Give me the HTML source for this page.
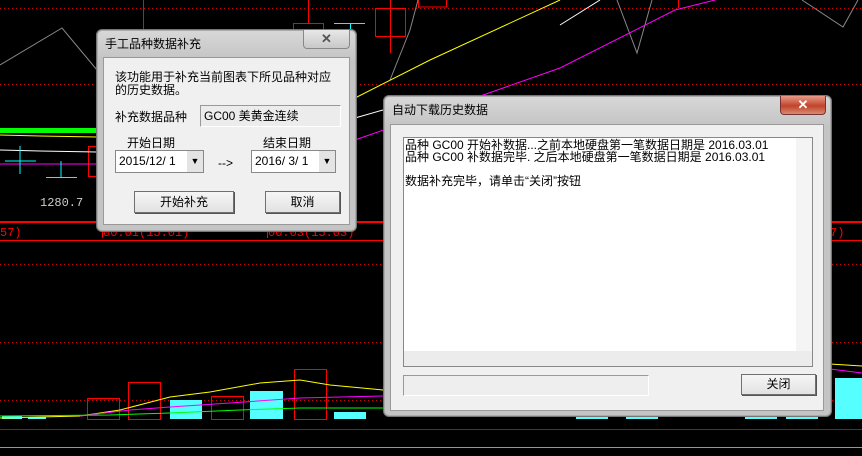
<!DOCTYPE html>
<html><head><meta charset="utf-8"><style>
body{margin:0;width:862px;height:456px;background:#000;overflow:hidden;position:relative;font-family:"Liberation Sans","Noto Sans CJK SC","WenQuanYi Zen Hei",sans-serif;font-size:12px;color:#000}
.abs{position:absolute}
.dlg{position:absolute;background:linear-gradient(#d8d8d8,#c4c4c4 30px,#c4c4c4);border:1px solid #777;border-radius:6px;box-shadow:0 0 0 1px #aaa inset}
.inner{position:absolute;background:#f0f0f0;border:1px solid #999}
.btn{position:absolute;background:linear-gradient(#f6f6f6,#e2e2e2);border:1px solid #707070;box-shadow:1px 1px 0 #555;text-align:center;font-size:12px}
.t{position:absolute;white-space:nowrap}
</style></head><body>
<svg class="abs" style="left:0;top:0" width="862" height="456">
<g stroke="#c00" stroke-dasharray="1 3" stroke-width="1">
<line x1="0" y1="8.5" x2="862" y2="8.5"/><line x1="0" y1="84.5" x2="862" y2="84.5"/>
<line x1="0" y1="264.5" x2="862" y2="264.5"/><line x1="0" y1="342.5" x2="862" y2="342.5"/><line x1="0" y1="400.5" x2="862" y2="400.5"/>
</g>
<line x1="0" y1="222" x2="862" y2="222" stroke="#f00" stroke-width="2"/>
<line x1="0" y1="240.5" x2="862" y2="240.5" stroke="#f00"/>
<line x1="0" y1="429.5" x2="862" y2="429.5" stroke="#c00"/>
<line x1="0" y1="447.5" x2="862" y2="447.5" stroke="#0f0"/>
<g stroke="#f00" fill="none">
<line x1="143.5" y1="0" x2="143.5" y2="29"/><line x1="308.5" y1="0" x2="308.5" y2="23"/><rect x="293.5" y="23.5" width="30" height="10"/>
<line x1="390.5" y1="0" x2="390.5" y2="53"/><rect x="375.5" y="8.5" width="30" height="28"/><line x1="418.5" y1="0" x2="418.5" y2="8"/><rect x="418.5" y="-2" width="28" height="9"/>
<rect x="88.5" y="146.5" width="8" height="30"/>
<line x1="678.5" y1="0" x2="678.5" y2="8"/>
</g>
<line x1="334" y1="23.5" x2="365" y2="23.5" stroke="#0ff"/><line x1="350.5" y1="23" x2="350.5" y2="30" stroke="#0ff"/>
<polyline points="0,65 62,28 97,70" stroke="#888" fill="none"/>
<polyline points="390,80 410,30 418,0" stroke="#888" fill="none"/>
<polyline points="617,0 637,53 652,0" stroke="#888" fill="none"/>
<polyline points="802,0 843,27 858,0" stroke="#888" fill="none"/>
<polyline points="355,98 430,60 560,0" stroke="#ff0" fill="none"/>
<polyline points="355,140 560,68 675,10 715,0" stroke="#f0f" fill="none"/>
<polyline points="355,118 383,110" stroke="#fff" fill="none"/><polyline points="560,25 600,0" stroke="#fff" fill="none"/>
<rect x="0" y="128" width="97" height="5" fill="#0f0"/>
<polyline points="0,135 40,136 97,137" stroke="#ff0" fill="none"/>
<polyline points="0,150 40,151 97,152" stroke="#fff" fill="none"/>
<polyline points="0,164 97,164" stroke="#f0f" fill="none"/>
<g stroke="#0ff"><line x1="20" y1="146" x2="20" y2="174"/><line x1="5" y1="161" x2="36" y2="161"/><line x1="61" y1="161" x2="61" y2="177"/><line x1="46" y1="177.5" x2="77" y2="177.5"/></g>
<text x="40" y="206" fill="#ccc" font-family="Liberation Mono" font-size="12">1280.7</text>
<text x="0" y="236" fill="#f00" font-family="Liberation Mono" font-size="12">57)</text>
<text x="830" y="236" fill="#f00" font-family="Liberation Mono" font-size="12">7)</text>
<text x="103" y="236" fill="#f00" font-family="Liberation Mono" font-size="12">00.01(15.01)</text>
<text x="268" y="236" fill="#f00" font-family="Liberation Mono" font-size="12">00.03(15.03)</text>
<line x1="102.5" y1="226" x2="102.5" y2="238" stroke="#f00"/><line x1="267.5" y1="226" x2="267.5" y2="238" stroke="#f00"/>
<g fill="#5ff">
<rect x="2" y="416" width="20" height="3"/><rect x="28" y="417" width="18" height="2"/><rect x="170" y="400" width="32" height="19"/><rect x="250" y="391" width="33" height="28"/><rect x="334" y="412" width="32" height="7"/><rect x="576" y="413" width="32" height="6"/><rect x="626" y="413" width="32" height="6"/><rect x="745" y="413" width="32" height="6"/><rect x="786" y="413" width="32" height="6"/><rect x="835" y="378" width="27" height="41"/>
</g>
<g stroke="#f00" fill="none">
<rect x="87.5" y="398.5" width="32" height="21"/><rect x="128.5" y="382.5" width="32" height="37"/><rect x="211.5" y="396.5" width="32" height="23"/><rect x="294.5" y="369.5" width="32" height="50"/>
</g>
<polyline points="0,418 80,416 120,410 170,397 210,392 260,383 300,380 330,385 383,390" stroke="#ff0" fill="none"/>
<polyline points="80,416 130,410 170,407 230,403 300,398 383,396" stroke="#f0f" fill="none"/>
<polyline points="0,416 110,415 170,413 240,410 300,408 383,408" stroke="#0f0" fill="none"/>
<polyline points="830,364 862,366" stroke="#ff0" fill="none"/><polyline points="830,369 862,373" stroke="#f0f" fill="none"/>
</svg>

<div class="dlg" style="left:96px;top:29px;width:259px;height:201px">
 <div class="t" style="left:8px;top:5px;font-size:12px">手工品种数据补充</div>
 <div class="abs" style="left:206px;top:0;width:45px;height:18px;border:1px solid #888;border-top:none;border-radius:0 0 4px 4px;background:linear-gradient(#e8e8e8,#c8c8c8);text-align:center;font-weight:bold;color:#555;font-size:13px;line-height:17px">✕</div>
 <div class="inner" style="left:6px;top:27px;width:245px;height:166px">
  <div class="t" style="left:11px;top:13px;font-size:12px;line-height:13px">该功能用于补充当前图表下所见品种对应<br>的历史数据。</div>
  <div class="t" style="left:11px;top:50px;font-size:12px">补充数据品种</div>
  <div class="abs" style="left:96px;top:47px;width:136px;height:20px;background:#ececec;border:1px solid #999;border-right-color:#fff;border-bottom-color:#fff;font-size:12px;line-height:20px;padding-left:3px">GC00 美黄金连续</div>
  <div class="t" style="left:23px;top:76px;font-size:12px">开始日期</div>
  <div class="t" style="left:159px;top:76px;font-size:12px">结束日期</div>
  <div class="abs" style="left:11px;top:92px;width:84px;height:21px;background:#fff;border:1px solid #888;font-size:12px;line-height:21px;padding-left:3px">2015/12/ 1<span class="abs" style="right:0;top:0;width:16px;height:21px;background:#e4e4e4;text-align:center;font-size:9px">▼</span></div>
  <div class="t" style="left:114px;top:98px;font-size:12px">--></div>
  <div class="abs" style="left:147px;top:92px;width:80px;height:21px;background:#fff;border:1px solid #888;font-size:12px;line-height:21px;padding-left:3px">2016/ 3/ 1<span class="abs" style="right:0;top:0;width:16px;height:21px;background:#e4e4e4;text-align:center;font-size:9px">▼</span></div>
  <div class="btn" style="left:30px;top:133px;width:98px;height:20px;line-height:20px;font-size:12px">开始补充</div>
  <div class="btn" style="left:161px;top:133px;width:73px;height:20px;line-height:20px;font-size:12px">取消</div>
 </div>
</div>

<div class="dlg" style="left:383px;top:95px;width:447px;height:320px">
 <div class="t" style="left:8px;top:5px;font-size:12px">自动下载历史数据</div>
 <div class="abs" style="left:396px;top:0;width:44px;height:18px;border:1px solid #733;border-top:none;border-radius:0 0 4px 4px;background:linear-gradient(#e89a88,#c0442a 55%,#d88a70);text-align:center;font-weight:bold;color:#fff;font-size:13px;line-height:17px">✕</div>
 <div class="inner" style="left:6px;top:28px;width:432px;height:285px">
  <div class="abs" style="left:12px;top:12px;width:408px;height:228px;background:#fff;border:1px solid #888">
   <div class="t" style="left:1px;top:1px;font-size:12px;line-height:12px">品种 GC00 开始补数据...之前本地硬盘第一笔数据日期是 2016.03.01<br>品种 GC00 补数据完毕. 之后本地硬盘第一笔数据日期是 2016.03.01<br><br>数据补充完毕，请单击“关闭”按钮</div>
   <div class="abs" style="right:0;top:0;width:16px;height:214px;background:#f4f4f4"></div>
   <div class="abs" style="left:0;bottom:0;width:408px;height:15px;background:#ececec"></div>
  </div>
  <div class="abs" style="left:12px;top:250px;width:244px;height:19px;background:#eee;border:1px solid #999;border-right-color:#fff;border-bottom-color:#fff"></div>
  <div class="btn" style="left:350px;top:249px;width:73px;height:19px;line-height:19px;font-size:12px">关闭</div>
 </div>
</div>
</body></html>
